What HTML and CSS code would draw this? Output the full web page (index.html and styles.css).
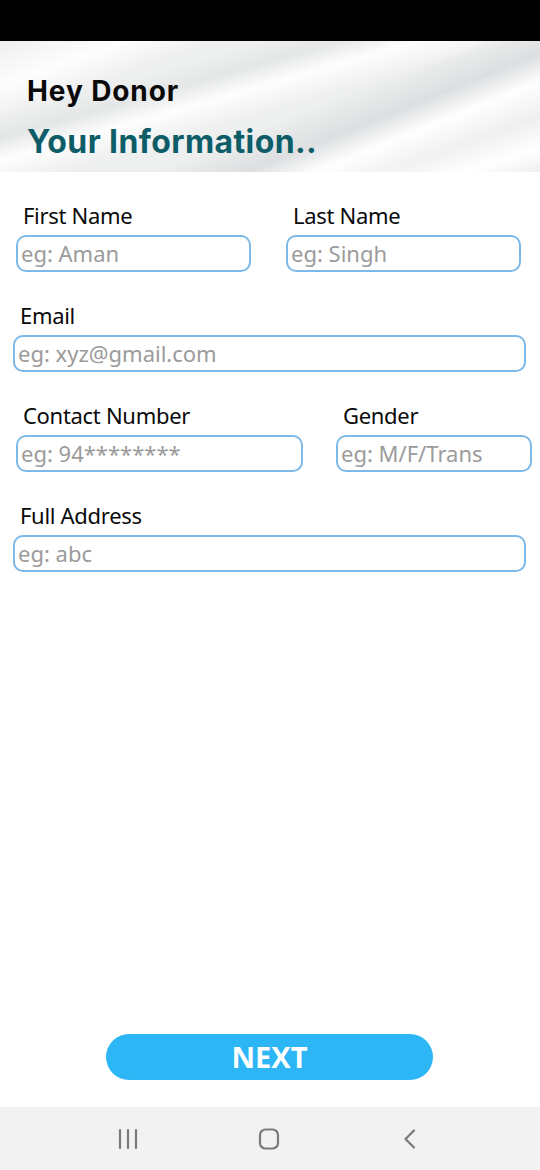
FILE: index.html
```html
<!DOCTYPE html>
<html>
<head>
<meta charset="utf-8">
<link rel="stylesheet" href="styles.css">
</head>
<body>
<div class="screen">
  <div class="status"></div>
  <header class="hero">
    <h1 class="hey">Hey Donor</h1>
    <h2 class="info">Your Information..</h2>
  </header>
  <main class="form">
    <div class="row row-names">
      <div class="field f-first">
        <label class="lbl">First Name</label>
        <input class="inp" placeholder="eg: Aman">
      </div>
      <div class="field f-last">
        <label class="lbl">Last Name</label>
        <input class="inp" placeholder="eg: Singh">
      </div>
    </div>
    <div class="row">
      <div class="field f-full">
        <label class="lbl lbl-wide">Email</label>
        <input class="inp" placeholder="eg: xyz@gmail.com">
      </div>
    </div>
    <div class="row row-contact">
      <div class="field f-contact">
        <label class="lbl">Contact Number</label>
        <input class="inp" placeholder="eg: 94********">
      </div>
      <div class="field f-gender">
        <label class="lbl">Gender</label>
        <input class="inp" placeholder="eg: M/F/Trans">
      </div>
    </div>
    <div class="row">
      <div class="field f-full">
        <label class="lbl lbl-wide">Full Address</label>
        <input class="inp" placeholder="eg: abc">
      </div>
    </div>
  </main>
  <div class="spacer"></div>
  <div class="btn-wrap">
    <button class="next">NEXT</button>
  </div>
  <nav class="navbar">
    <svg class="nav-ico" width="24" height="24" viewBox="0 0 24 24"><path d="M3 3v18M11 3v18M19 3v18" stroke="#7a7a7a" stroke-width="2.2" fill="none" stroke-linecap="round"/></svg>
    <svg class="nav-ico" width="24" height="24" viewBox="0 0 24 24"><rect x="3" y="2.5" width="18" height="19" rx="5.5" stroke="#7a7a7a" stroke-width="2.2" fill="none"/></svg>
    <svg class="nav-ico" width="24" height="24" viewBox="0 0 24 24"><path d="M17 3.5 L8.5 12 L17 20.5" stroke="#7a7a7a" stroke-width="2.2" fill="none" stroke-linecap="round" stroke-linejoin="round"/></svg>
  </nav>
</div>
</body>
</html>
```

FILE: styles.css
```css
* { box-sizing: border-box; }
html, body { margin: 0; padding: 0; background: #fff; }
.screen {
  width: 540px;
  height: 1170px;
  display: flex;
  flex-direction: column;
  overflow: hidden;
}
.status { height: 41px; background: #000; flex: none; }
.hero {
  height: 131px;
  flex: none;
  padding: 33px 0 0 27px;
  background:
    linear-gradient(160deg, rgba(255,255,255,0) 0%, rgba(255,255,255,0.9) 14%, rgba(255,255,255,0) 24%),
    linear-gradient(164deg, rgba(225,227,228,0) 26%, rgba(225,227,228,0.7) 34%, rgba(255,255,255,0.9) 42%, rgba(255,255,255,0) 52%),
    linear-gradient(158deg, rgba(220,222,224,0) 55%, rgba(216,218,220,0.8) 66%, rgba(255,255,255,0.95) 74%, rgba(220,222,224,0) 84%),
    linear-gradient(162deg, rgba(255,255,255,0) 82%, rgba(255,255,255,1) 92%, rgba(235,236,237,0) 100%),
    #eeefef;
}
.hey {
  margin: 0;
  font-family: Inter, "Liberation Sans", sans-serif;
  font-weight: 700;
  font-size: 28px;
  line-height: 34px;
  letter-spacing: 0.9px;
  color: #0a0a0a;
}
.info {
  margin: 15px 0 0;
  font-family: Inter, "Liberation Sans", sans-serif;
  font-weight: 700;
  font-size: 32px;
  line-height: 38px;
  letter-spacing: 0.4px;
  color: #0c5d68;
}
.form {
  flex: none;
  padding-top: 29px;
  display: flex;
  flex-direction: column;
  gap: 29px;
}
.row { display: flex; }
.field { display: flex; flex-direction: column; gap: 6px; }
.lbl {
  font-family: "Noto Sans", "Open Sans", sans-serif;
  font-size: 22px;
  line-height: 28px;
  color: #0a0a0a;
  padding-left: 7px;
  letter-spacing: -0.3px;
}
.lbl-wide { padding-left: 7px; }
.inp {
  height: 37px;
  border: 2px solid #7cb9e8;
  border-radius: 10px;
  padding: 0 0 2px 3px;
  font-family: "Noto Sans", "Open Sans", sans-serif;
  font-size: 22px;
  color: #333;
  background: #fff;
  outline: none;
  width: 100%;
}
.inp::placeholder { color: #9b9b9b; opacity: 1; }
.row-names { padding-left: 16px; gap: 35px; }
.f-first, .f-last { width: 235px; }
.f-full { margin-left: 13px; width: 513px; }
.row-contact { padding-left: 16px; gap: 33px; }
.f-contact { width: 287px; }
.f-gender { width: 196px; }
.spacer { flex: 1; }
.btn-wrap { flex: none; display: flex; justify-content: flex-start; padding: 0 0 27px 106px; }
.next {
  width: 327px;
  height: 46px;
  border: none;
  border-radius: 23px;
  background: #2db6f6;
  color: #fff;
  font-family: "Open Sans", "Noto Sans", sans-serif;
  font-weight: 700;
  font-size: 29px;
  line-height: 46px;
  padding: 0;
  letter-spacing: 0;
}
.navbar {
  height: 63px;
  flex: none;
  background: #f2f2f2;
  display: flex;
  align-items: center;
  justify-content: space-between;
  padding: 0 119px 0 117px;
}
.nav-ico { display: block; }
```
